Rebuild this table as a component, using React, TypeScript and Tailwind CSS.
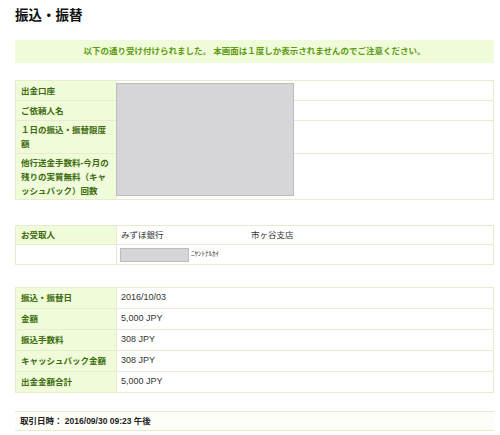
const JP = "font-['Liberation_Sans','Noto_Sans_CJK_JP',sans-serif]"

function Label({ children }: { children: React.ReactNode }) {
  return (
    <div className="w-[101px] shrink-0 bg-[#effbd9] border-r border-[#e6edcc] px-[5px] flex items-center text-[8.5px] leading-[14px] font-bold text-[#3d6b0f]">
      <span>{children}</span>
    </div>
  )
}

function Row({ label, value, h, last }: { label: React.ReactNode; value?: React.ReactNode; h: string; last?: boolean }) {
  return (
    <div className={`flex ${h} ${last ? '' : 'border-b border-[#e6edcc]'}`}>
      <Label>{label}</Label>
      <div className="flex-1 flex items-center pl-[4px] text-[9px] text-[#333]">{value}</div>
    </div>
  )
}

export default function App() {
  return (
    <div className={`w-[500px] h-[435px] bg-white ${JP} overflow-hidden`}>
      <div className="pl-[15px] pr-[6px]">
        <h1 className="pt-[7px] text-[13.5px] leading-[18px] font-bold text-[#111]">振込・振替</h1>

        <div className="mt-[15px] h-[23px] bg-[#f0fcd9] flex items-center justify-center text-[8.5px] font-bold text-[#5e9a12]">
          以下の通り受け付けられました。 本画面は１度しか表示されませんのでご注意ください。
        </div>

        {/* 出金口座 */}
        <div className="relative mt-[17px] border border-[#e6edcc]">
          <Row h="h-[20px]" label="出金口座" />
          <Row h="h-[20px]" label="ご依頼人名" />
          <Row h="h-[33px]" label="１日の振込・振替限度額" />
          <Row h="h-[45px]" last label="他行送金手数料-今月の残りの実質無料（キャッシュバック）回数" />
          <div className="absolute left-[100px] top-[2px] w-[178px] h-[113px] bg-[#d6d6d8] border border-[#bdbdbf]" />
        </div>

        {/* お受取人 */}
        <div className="mt-[25px] border border-[#e6edcc]">
          <div className="flex h-[19px] border-b border-[#e6edcc]">
            <Label>お受取人</Label>
            <div className="flex-1 flex items-center pl-[4px] text-[8.5px] text-[#333]">
              <span className="w-[130px]">みずほ銀行</span>
              <span>市ヶ谷支店</span>
            </div>
          </div>
          <div className="flex h-[19px]">
            <div className="w-[101px] shrink-0 border-r border-[#e6edcc]" />
            <div className="flex-1 flex items-center pl-[3px] gap-[2px]">
              <div className="w-[69px] h-[14px] bg-[#d6d6d8] border border-[#bdbdbf]" />
              <span className="text-[7px] text-[#333]">ﾆﾔﾝﾄﾅﾙｶｲ</span>
            </div>
          </div>
        </div>

        {/* 振込内容 */}
        <div className="mt-[22px] border border-[#e6edcc]">
          <Row h="h-[21px]" label="振込・振替日" value="2016/10/03" />
          <Row h="h-[21px]" label="金額" value="5,000 JPY" />
          <Row h="h-[21px]" label="振込手数料" value="308 JPY" />
          <Row h="h-[21px]" label="キャッシュバック金額" value="308 JPY" />
          <Row h="h-[20px]" last label="出金金額合計" value="5,000 JPY" />
        </div>

        <div className="mt-[18px] h-[20px] bg-[#fdfef7] border-y border-[#e6edcc] flex items-center pl-[5px] text-[8.5px] font-bold text-[#222]">
          取引日時： 2016/09/30 09:23 午後
        </div>
      </div>
    </div>
  )
}
